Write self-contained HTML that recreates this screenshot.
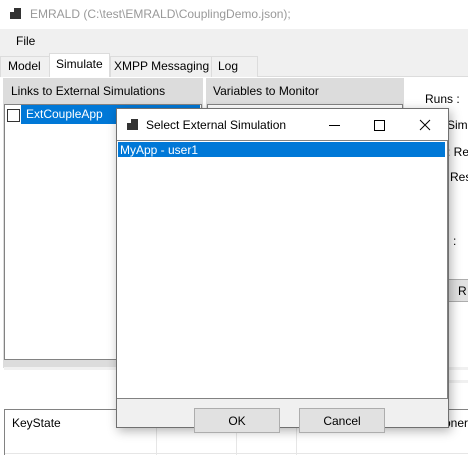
<!DOCTYPE html>
<html><head><meta charset="utf-8"><style>
*{margin:0;padding:0;box-sizing:border-box}
body{width:468px;height:455px;overflow:hidden;background:#f0f0f0;font-family:"Liberation Sans",sans-serif;font-size:12px;color:#000;position:relative}
.a{position:absolute}
.t{position:absolute;white-space:nowrap;line-height:14px}
</style></head><body>
<!-- title bar -->
<div class="a" style="left:0;top:0;width:468px;height:29px;background:#fff"></div>
<svg class="a" style="left:10px;top:8px" width="12" height="12"><rect x="4" y="0" width="7" height="7" fill="#333"/><rect x="0" y="4" width="5" height="7" fill="#333"/><rect x="4" y="7" width="7" height="4" fill="#333"/></svg>
<div class="t" style="left:30px;top:7px;color:#999;font-size:12px">EMRALD (C:\test\EMRALD\CouplingDemo.json);</div>
<!-- menu -->
<div class="t" style="left:16px;top:34px">File</div>
<!-- tab strip -->
<div class="a" style="left:0;top:76px;width:468px;height:379px;background:#fff;border-top:1px solid #dcdcdc"></div>
<div class="a" style="left:0;top:56px;width:50px;height:21px;border:1px solid #dcdcdc;border-bottom:none;background:#f0f0f0"></div>
<div class="t" style="left:8px;top:59px">Model</div>
<div class="a" style="left:49px;top:53px;width:61px;height:24px;border:1px solid #dcdcdc;border-bottom:none;background:#fff"></div>
<div class="t" style="left:56px;top:57px">Simulate</div>
<div class="a" style="left:110px;top:56px;width:102px;height:21px;border:1px solid #dcdcdc;border-bottom:none;background:#f0f0f0"></div>
<div class="t" style="left:114px;top:59px">XMPP Messaging</div>
<div class="a" style="left:211px;top:56px;width:47px;height:21px;border:1px solid #dcdcdc;border-bottom:none;background:#f0f0f0"></div>
<div class="t" style="left:218px;top:59px">Log</div>
<!-- left panel -->
<div class="a" style="left:3px;top:78px;width:200px;height:290px;background:#dcdcdc"></div>
<div class="t" style="left:11px;top:84px">Links to External Simulations</div>
<div class="a" style="left:4px;top:104px;width:198px;height:256px;background:#fff;border:1px solid #828282"></div>
<div class="a" style="left:7px;top:109px;width:13px;height:13px;border:1px solid #333;background:#fff"></div>
<div class="a" style="left:21px;top:105px;width:179px;height:19px;background:#0078d7"></div>
<div class="t" style="left:26px;top:107px;color:#fff">ExtCoupleApp</div>
<!-- middle panel -->
<div class="a" style="left:206px;top:78px;width:198px;height:290px;background:#dcdcdc"></div>
<div class="t" style="left:213px;top:84px">Variables to Monitor</div>
<div class="a" style="left:207px;top:104px;width:196px;height:256px;background:#fff;border:1px solid #828282"></div>
<div class="a" style="left:209px;top:108px;width:13px;height:13px;border:1px solid #333"></div>
<!-- separator -->
<div class="a" style="left:4px;top:367px;width:464px;height:3px;background:#f0f0f0"></div>
<!-- right labels -->
<div class="t" style="left:425px;top:92px">Runs :</div>
<div class="t" style="left:447px;top:118px">Sim</div>
<div class="t" style="left:447px;top:145px">: Re</div>
<div class="t" style="left:450px;top:170px">Res</div>
<div class="t" style="left:447px;top:234px">l :</div>
<div class="a" style="left:447px;top:279px;width:21px;height:23px;background:#e1e1e1;border:1px solid #adadad;border-right:none"></div>
<div class="t" style="left:458px;top:284px">R</div>
<div class="a" style="left:404px;top:380px;width:64px;height:3px;background:#f0f0f0"></div>
<!-- bottom grid -->
<div class="a" style="left:4px;top:409px;width:464px;height:46px;border:1px solid #828282;border-right:none;border-bottom:none;background:#fff"></div>
<div class="t" style="left:12px;top:416px">KeyState</div>
<div class="a" style="left:5px;top:453px;width:463px;height:1px;background:#e6e6e6"></div>
<div class="a" style="left:156px;top:410px;width:1px;height:45px;background:#e6e6e6"></div>
<div class="a" style="left:236px;top:410px;width:1px;height:45px;background:#e6e6e6"></div>
<div class="a" style="left:296px;top:410px;width:1px;height:45px;background:#e6e6e6"></div>
<div class="t" style="left:444px;top:416px">oner</div>
<!-- dialog -->
<div class="a" style="left:116px;top:108px;width:333px;height:320px;background:#f0f0f0;border:1px solid #707070;box-shadow:2px 3px 10px rgba(0,0,0,0.3)"></div>
<div class="a" style="left:117px;top:109px;width:331px;height:31px;background:#fff"></div>
<svg class="a" style="left:127px;top:119px" width="12" height="12"><rect x="4" y="0" width="7" height="7" fill="#333"/><rect x="0" y="4" width="5" height="7" fill="#333"/><rect x="4" y="7" width="7" height="4" fill="#333"/></svg>
<div class="t" style="left:146px;top:118px">Select External Simulation</div>
<svg class="a" style="left:325px;top:117px" width="110" height="16"><path d="M4 8.5H15" stroke="#000" stroke-width="1"/><rect x="49.5" y="3.5" width="10" height="10" fill="none" stroke="#000"/><path d="M95 3L105 13M105 3L95 13" stroke="#000" stroke-width="1"/></svg>
<div class="a" style="left:117px;top:140px;width:331px;height:259px;background:#fff;border:1px solid #828282;border-left:none"></div>
<div class="a" style="left:118px;top:142px;width:327px;height:15px;background:#0078d7"></div>
<div class="t" style="left:120px;top:143px;color:#fff">MyApp - user1</div>
<div class="a" style="left:194px;top:408px;width:86px;height:25px;background:#e1e1e1;border:1px solid #adadad"></div>
<div class="t" style="left:194px;top:414px;width:86px;text-align:center">OK</div>
<div class="a" style="left:299px;top:408px;width:86px;height:25px;background:#e1e1e1;border:1px solid #adadad"></div>
<div class="t" style="left:299px;top:414px;width:86px;text-align:center">Cancel</div>
</body></html>
